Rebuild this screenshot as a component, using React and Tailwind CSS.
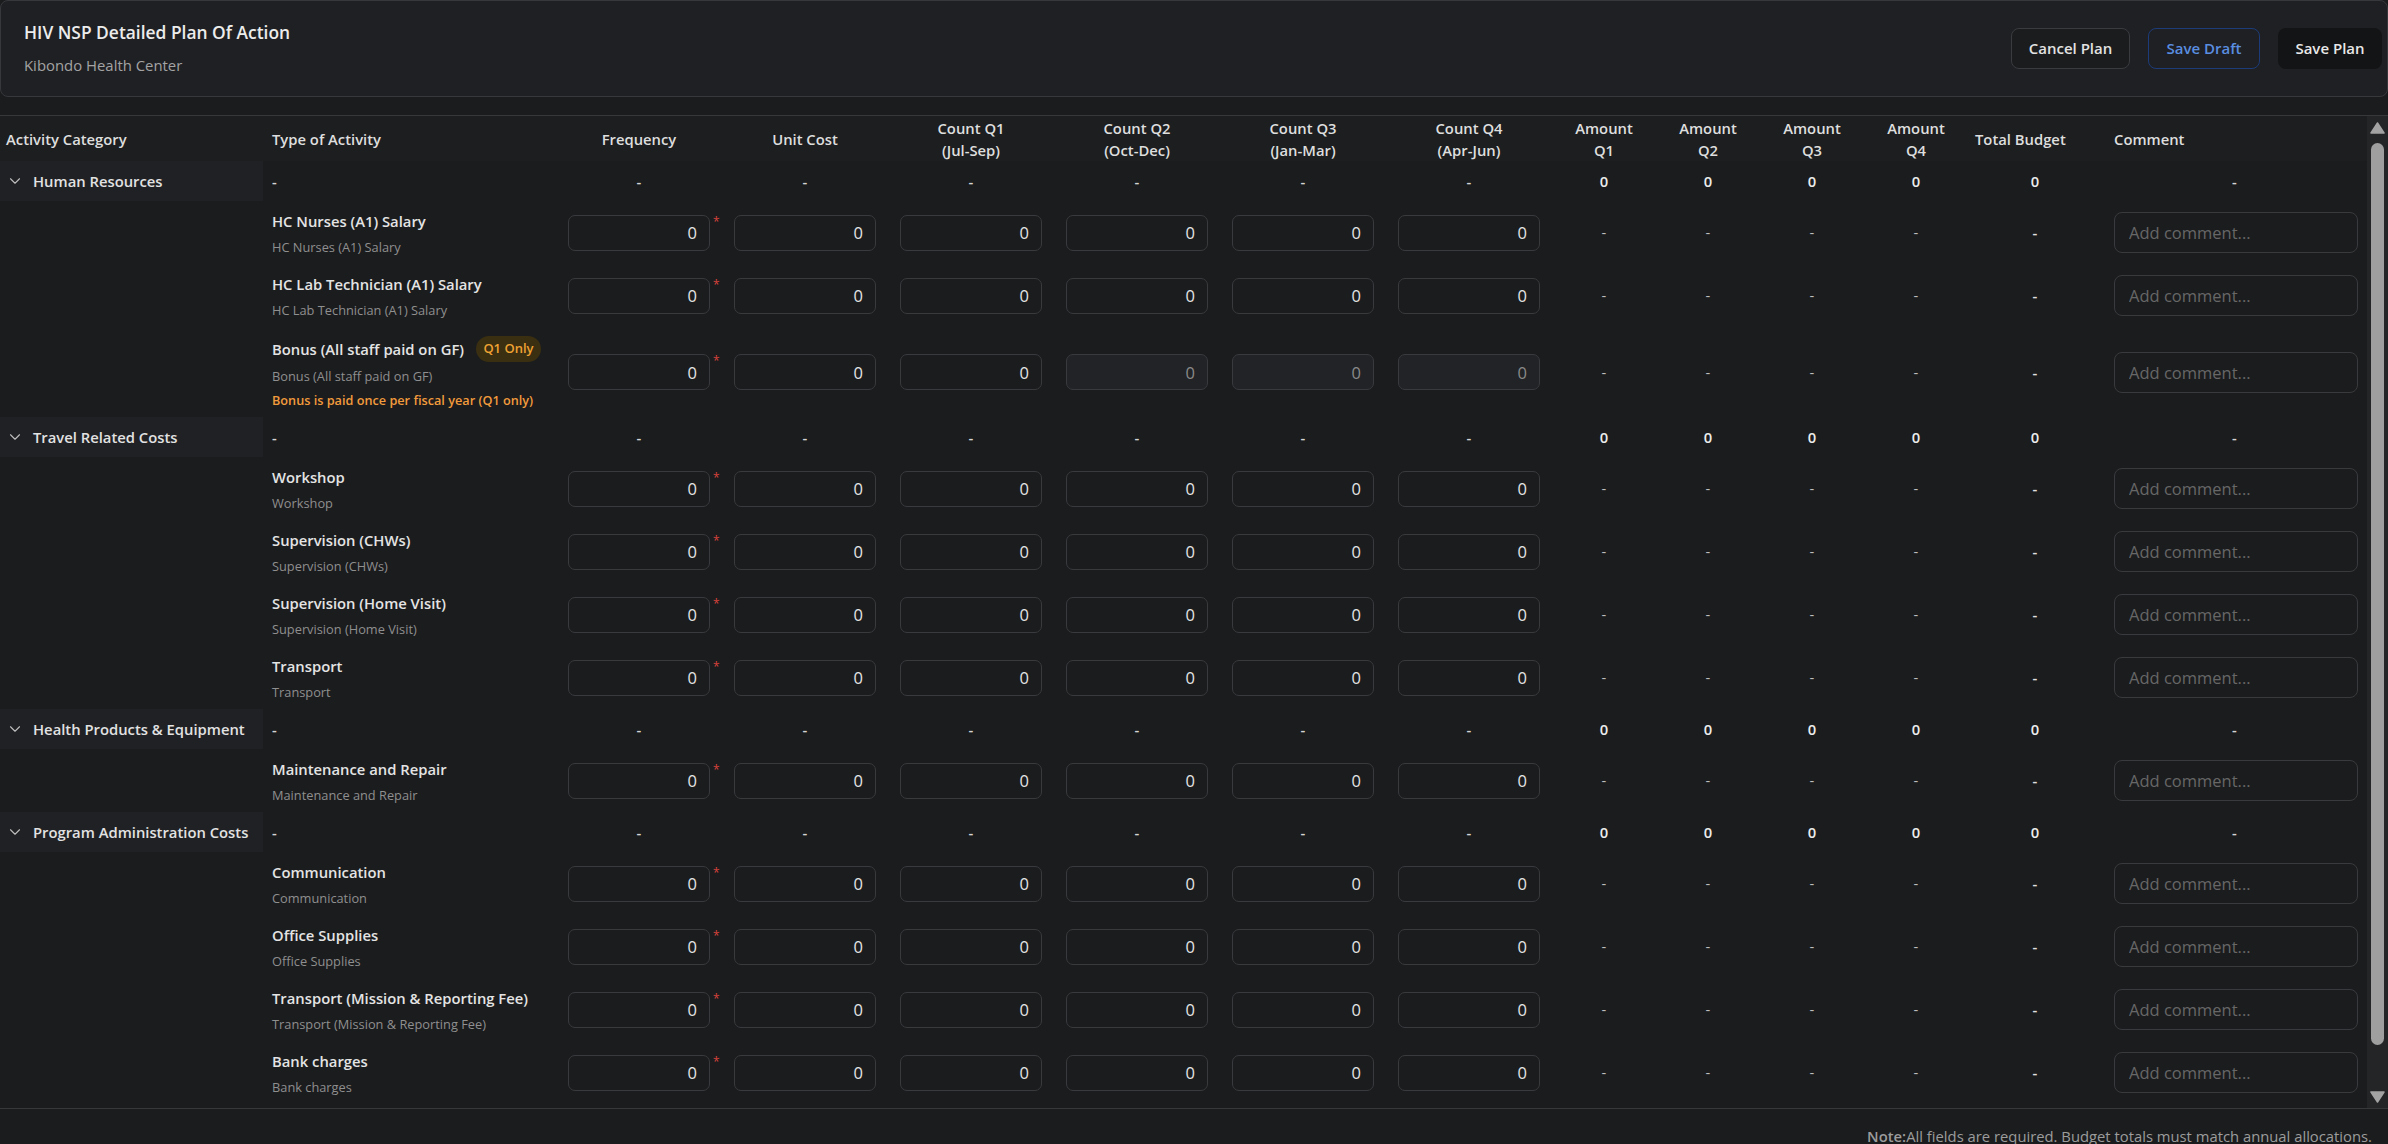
import React from "react";
import { ChevronDown } from "lucide-react";

const COLS =
  "grid grid-cols-[263px_293px_166px_166px_166px_166px_166px_166px_104px_104px_104px_104px_134px_265px]";

const sections = [
  {
    name: "Human Resources",
    items: [
      { t: "HC Nurses (A1) Salary" },
      { t: "HC Lab Technician (A1) Salary" },
      { t: "Bonus (All staff paid on GF)", bonus: true },
    ],
  },
  {
    name: "Travel Related Costs",
    items: [
      { t: "Workshop" },
      { t: "Supervision (CHWs)" },
      { t: "Supervision (Home Visit)" },
      { t: "Transport" },
    ],
  },
  {
    name: "Health Products & Equipment",
    items: [{ t: "Maintenance and Repair" }],
  },
  {
    name: "Program Administration Costs",
    items: [
      { t: "Communication" },
      { t: "Office Supplies" },
      { t: "Transport (Mission & Reporting Fee)" },
      { t: "Bank charges" },
    ],
  },
];

function HeaderRow() {
  const center = "flex items-center justify-center text-center";
  return (
    <div className={`${COLS} h-[45px] bg-[#1d1e20] text-[14.8px] font-semibold leading-[22px] text-[#dedede]`}>
      <div className="flex items-center pl-[6px]">Activity Category</div>
      <div className="flex items-center pl-[9px]">Type of Activity</div>
      <div className={center}>Frequency</div>
      <div className={center}>Unit Cost</div>
      <div className={center}>Count Q1<br />(Jul-Sep)</div>
      <div className={center}>Count Q2<br />(Oct-Dec)</div>
      <div className={center}>Count Q3<br />(Jan-Mar)</div>
      <div className={center}>Count Q4<br />(Apr-Jun)</div>
      <div className={center}>Amount<br />Q1</div>
      <div className={center}>Amount<br />Q2</div>
      <div className={center}>Amount<br />Q3</div>
      <div className={center}>Amount<br />Q4</div>
      <div className="flex items-center pl-[7px]">Total Budget</div>
      <div className="flex items-center pl-[12px]">Comment</div>
    </div>
  );
}

function CategoryRow({ name }) {
  const dash = "flex items-center justify-center text-[14.8px] font-semibold text-[#d4d4d4]";
  const zero = "flex items-center justify-center text-[14.8px] font-semibold text-[#ececec]";
  return (
    <div className={`${COLS} h-[40px]`}>
      <div className="flex items-center gap-[9px] bg-[#202124] pl-[6px] text-[14.8px] font-semibold text-[#e2e2e2]">
        <ChevronDown size={18} strokeWidth={1.5} className="shrink-0 text-[#bdbdbd]" />
        <span className="whitespace-nowrap">{name}</span>
      </div>
      <div className="flex items-center pl-[9px] text-[14.8px] font-semibold text-[#d4d4d4]">-</div>
      {[0, 1, 2, 3, 4, 5].map((i) => (
        <div key={i} className={dash}>-</div>
      ))}
      {[0, 1, 2, 3].map((i) => (
        <div key={i} className={zero}>0</div>
      ))}
      <div className={zero}>0</div>
      <div className={dash}>-</div>
    </div>
  );
}

function NumCell({ req, disabled }) {
  return (
    <div className="relative flex items-center px-3">
      <input
        readOnly
        value="0"
        className={`h-[36px] w-full rounded-[7px] border border-[#393a3d] pr-[12px] text-right text-[16.5px] outline-none ${
          disabled ? "bg-[#222326] text-[#8a8a8a]" : "bg-[#1b1c1e] text-[#e4e4e4]"
        }`}
      />
      {req && (
        <span className="absolute left-[157px] top-[calc(50%-17px)] text-[12px] leading-none text-[#d8423c]">*</span>
      )}
    </div>
  );
}

function ItemRow({ item }) {
  const amt = "flex items-center justify-center text-[14.8px] text-[#bdbdbd]";
  return (
    <div className={`${COLS} ${item.bonus ? "h-[90px]" : "h-[63px]"}`}>
      <div />
      <div className="flex flex-col justify-center pl-[9px]">
        {item.bonus ? (
          <>
            <div className="flex h-[26px] items-center">
              <span className="whitespace-nowrap text-[14.8px] font-semibold leading-[20px] text-[#e4e4e4]">{item.t}</span>
              <span className="ml-[12px] flex h-[26px] w-[65px] shrink-0 items-center justify-center rounded-full bg-[#3a2f11] text-[13px] font-semibold text-[#f0a233]">
                Q1 Only
              </span>
            </div>
            <div className="mt-[6px] whitespace-nowrap text-[12.8px] leading-[16px] text-[#8f8f8f]">{item.t}</div>
            <div className="mt-[8px] whitespace-nowrap text-[12.7px] font-semibold leading-[16px] text-[#f29b3c]">
              Bonus is paid once per fiscal year (Q1 only)
            </div>
          </>
        ) : (
          <>
            <div className="whitespace-nowrap text-[14.8px] font-semibold leading-[20px] text-[#e4e4e4]">{item.t}</div>
            <div className="mt-[8px] whitespace-nowrap text-[12.8px] leading-[16px] text-[#8f8f8f]">{item.t}</div>
          </>
        )}
      </div>
      <NumCell req />
      <NumCell />
      <NumCell />
      <NumCell disabled={item.bonus} />
      <NumCell disabled={item.bonus} />
      <NumCell disabled={item.bonus} />
      {[0, 1, 2, 3].map((i) => (
        <div key={i} className={amt}>-</div>
      ))}
      <div className="flex items-center justify-center text-[14.8px] font-semibold text-[#e0e0e0]">-</div>
      <div className="flex items-center pl-[12px] pr-[9px]">
        <input
          readOnly
          placeholder="Add comment..."
          className="h-[41px] w-full rounded-[8px] border border-[#393a3d] bg-transparent pl-[14px] text-[16.5px] text-[#e4e4e4] outline-none placeholder:text-[#676767]"
        />
      </div>
    </div>
  );
}

function Scrollbar() {
  return (
    <div className="flex w-[21px] flex-col items-center bg-[#242527]">
      <svg width="15" height="12" viewBox="0 0 15 12" className="mt-[6px]">
        <path d="M7.5 1 L14 11 L1 11 Z" fill="#a3a3a3" stroke="#a3a3a3" strokeWidth="1.5" strokeLinejoin="round" />
      </svg>
      <div className="mt-[9px] h-[902px] w-[13px] rounded-full bg-[#9f9f9f]" />
      <div className="flex-1" />
      <svg width="15" height="12" viewBox="0 0 15 12" className="mb-[5px]">
        <path d="M1 1 L14 1 L7.5 11 Z" fill="#a3a3a3" stroke="#a3a3a3" strokeWidth="1.5" strokeLinejoin="round" />
      </svg>
    </div>
  );
}

export default function App() {
  return (
    <div className="min-h-screen w-[2388px] bg-[#1b1c1e] font-['Open_Sans','Noto_Sans',sans-serif] text-[#e4e4e4]">
      <div className="flex h-[97px] items-start justify-between rounded-[8px] border border-[#37383b] bg-[#1f2023]">
        <div className="pl-[23px] pt-[19px]">
          <div className="text-[17.4px] font-semibold leading-[24px] text-[#ececec]">HIV NSP Detailed Plan Of Action</div>
          <div className="mt-[11px] text-[14.9px] leading-[20px] text-[#a3a3a3]">Kibondo Health Center</div>
        </div>
        <div className="mr-[5px] mt-[27px] flex items-center gap-[18px]">
          <button className="h-[41px] w-[119px] rounded-[8px] border border-[#3a3b3e] bg-[#1b1c1e] text-[15px] font-semibold text-[#e2e2e2]">
            Cancel Plan
          </button>
          <button className="h-[41px] w-[112px] rounded-[8px] border border-[#1c3b78] bg-transparent text-[15px] font-semibold text-[#5a8ee0]">
            Save Draft
          </button>
          <button className="h-[41px] w-[104px] rounded-[8px] bg-[#131415] text-[15px] font-semibold text-[#e8e8e8]">
            Save Plan
          </button>
        </div>
      </div>

      <div className="mt-[18px] flex h-[994px] border-y border-[#37383b]">
        <div className="h-full w-[2367px] overflow-hidden">
          <HeaderRow />
          {sections.map((s) => (
            <React.Fragment key={s.name}>
              <CategoryRow name={s.name} />
              {s.items.map((it) => (
                <ItemRow key={it.t} item={it} />
              ))}
            </React.Fragment>
          ))}
        </div>
        <Scrollbar />
      </div>

      <div className="mt-[17px] pr-[16px] text-right text-[14.8px] leading-[20px] text-[#9c9c9c]">
        <span className="font-semibold">Note:</span>All fields are required. Budget totals must match annual allocations.
      </div>
      <div className="h-[20px]" />
    </div>
  );
}
